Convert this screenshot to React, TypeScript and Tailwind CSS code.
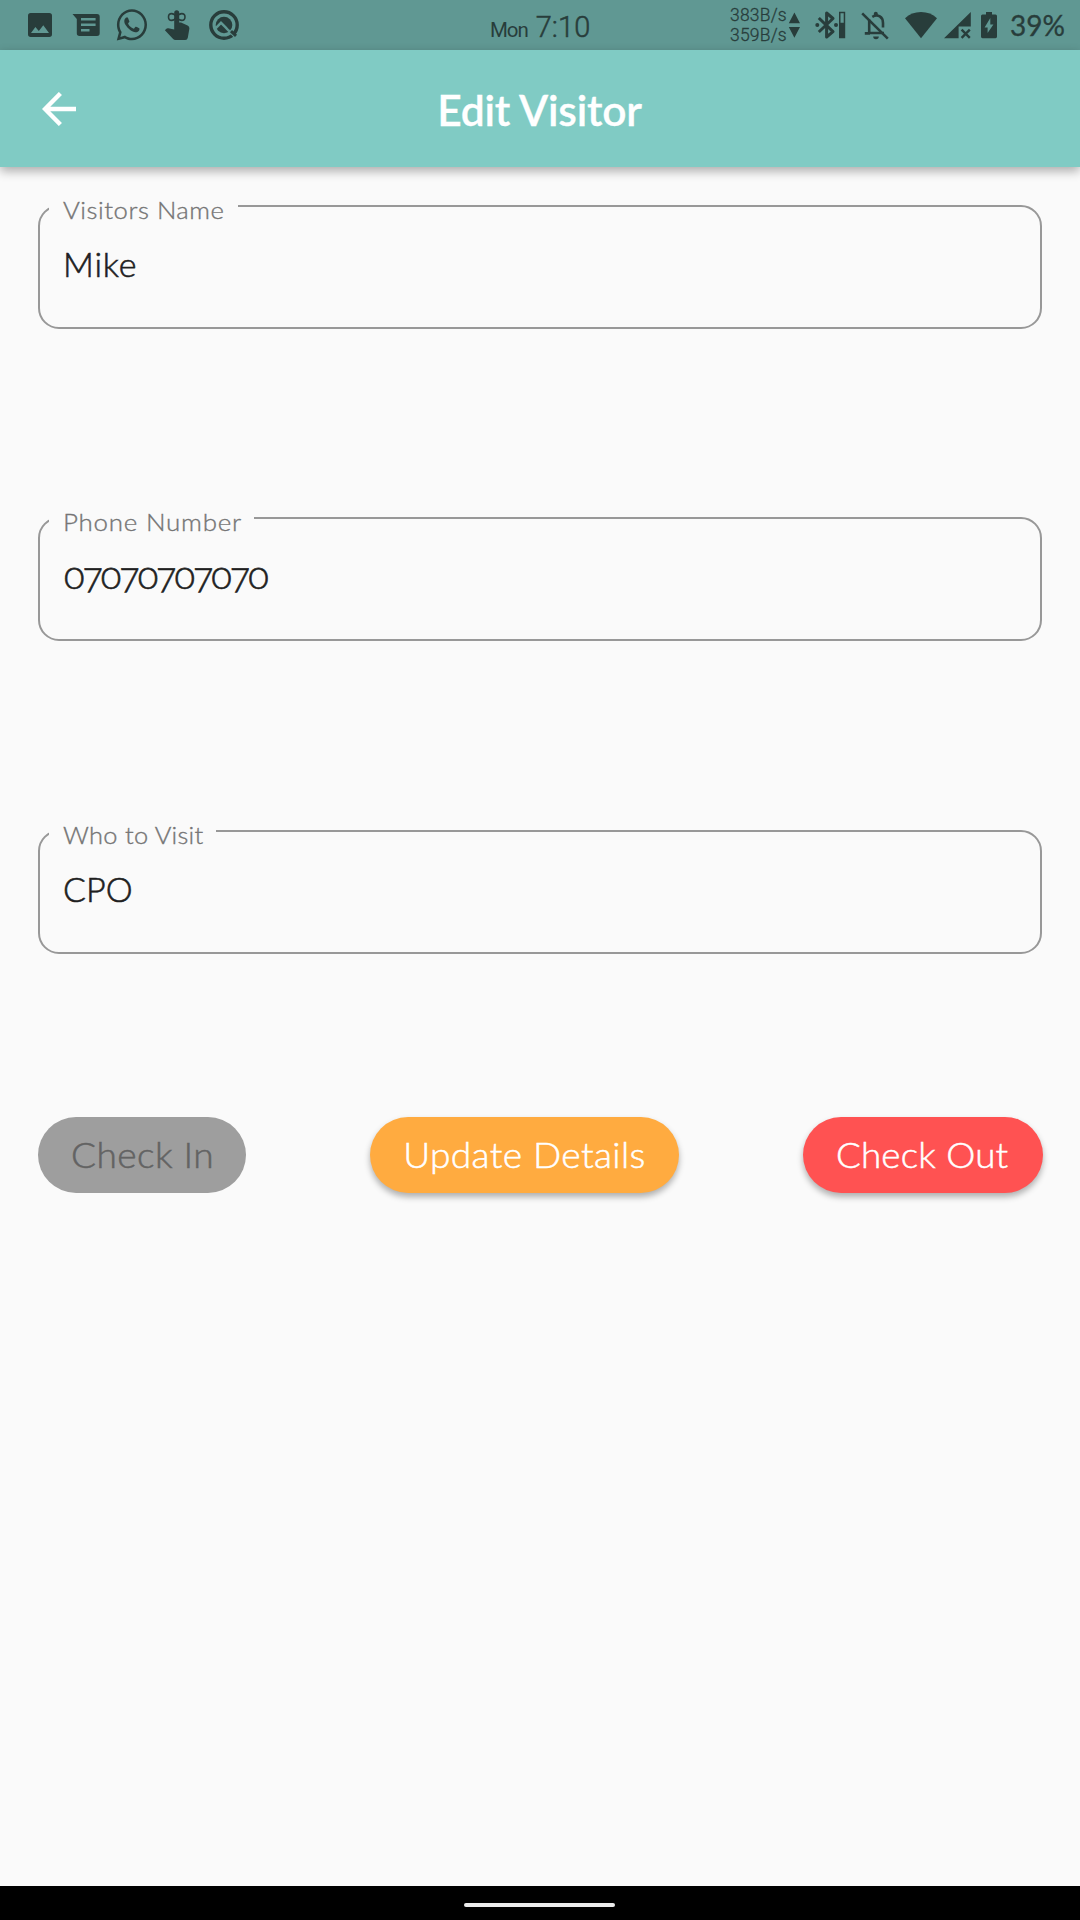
import React from "react";

const INK = "#283d3b";
const BAR = "#609893";

type GlyphProps = { box: string; w: number; h: number; className?: string; children: React.ReactNode };

function Glyph({ box, w, h, className = "", children }: GlyphProps) {
  return (
    <svg viewBox={box} width={w} height={h} fill={INK} className={`shrink-0 ${className}`}>
      {children}
    </svg>
  );
}

function StatusBar() {
  return (
    <div className="grid h-[50px] grid-cols-[491px_219px_1fr] bg-[#609893] text-[#283d3b]">
      <div className="flex h-[50px]">
        <Glyph box="0 0 260 50" w={260} h={50}>
          {/* image */}
          <path fillRule="evenodd" d="M30.7 13H49.3A2.7 2.7 0 0 1 52 15.7V34.3A2.7 2.7 0 0 1 49.3 37H30.7A2.7 2.7 0 0 1 28 34.3V15.7A2.7 2.7 0 0 1 30.7 13ZM31 33H49L43.3 25.2L38.8 31L35.4 27Z" />
          {/* message */}
          <path fillRule="evenodd" d="M72.5 14H97A2.7 2.7 0 0 1 99.7 16.7V33.3A2.7 2.7 0 0 1 97 36H79.5A2.7 2.7 0 0 1 76.8 33.3V19ZM81 18V20.6H95.6V18ZM81 23.4V26H95.6V23.4ZM81 28.9V31.5H89.5V28.9Z" />
          {/* whatsapp */}
          <g transform="translate(116.8 6.9) scale(0.0674 0.0702)">
            <path d="M380.9 97.1C339 55.1 283.2 32 223.9 32c-122.4 0-222 99.6-222 222 0 39.1 10.2 77.3 29.6 111L0 480l117.7-30.9c32.4 17.7 68.9 27 106.1 27h.1c122.3 0 224.1-99.6 224.1-222 0-59.3-25.2-115-67.1-157zm-157 341.6c-33.2 0-65.7-8.9-94-25.7l-6.7-4-69.8 18.3L72 359.2l-4.4-7c-18.5-29.4-28.2-63.3-28.2-98.2 0-101.7 82.8-184.5 184.6-184.5 49.3 0 95.6 19.2 130.4 54.1 34.8 34.9 56.2 81.2 56.1 130.5 0 101.8-84.9 184.6-186.6 184.6zm101.2-138.2c-5.5-2.8-32.8-16.2-37.9-18-5.1-1.9-8.8-2.8-12.5 2.8-3.7 5.6-14.3 18-17.6 21.8-3.2 3.7-6.5 4.2-12 1.4-32.6-16.3-54-29.1-75.5-66-5.7-9.8 5.7-9.1 16.3-30.3 1.8-3.7.9-6.9-.5-9.7-1.4-2.8-12.5-30.1-17.1-41.2-4.5-10.8-9.1-9.3-12.5-9.5-3.2-.2-6.9-.2-10.6-.2-3.7 0-9.7 1.4-14.8 6.9-5.1 5.6-19.4 19-19.4 46.3 0 27.3 19.9 53.7 22.6 57.4 2.8 3.7 39.1 59.7 94.8 83.8 35.2 15.2 49 16.5 66.6 13.9 10.7-1.6 32.8-13.4 37.4-26.4 4.6-13 4.6-24.1 3.2-26.4-1.3-2.5-5-3.9-10.5-6.6z" />
          </g>
          {/* reminder hand */}
          <g>
            <path d="M174.2 12.7a2.5 2.5 0 0 1 5 0V22.4H181L187.6 25.6Q189.6 26.6 189.4 28.6L187.8 37.7Q187.4 40 185.2 40H175.6Q174 40 172.9 38.8L164.9 30.3L166.1 28.9Q167 28.1 168.3 28.3L174.2 29.6Z" />
            <path d="M176.6 17C173.8 12.5 168.5 12.4 168.5 17S173.8 21.5 176.6 17C179.4 12.5 185 12.4 185 17S179.4 21.5 176.6 17Z" fill="none" stroke={INK} strokeWidth="1.6" />
          </g>
          {/* round search badge */}
          <g fill="none">
            <circle cx="224" cy="25" r="13.2" stroke={INK} strokeWidth="3.4" />
            <circle cx="224" cy="25" r="8.3" fill={INK} />
            <path d="M214.8 29.2L221 22.8L225.4 27.2L228.2 30.2L238 40" stroke={BAR} strokeWidth="2.4" />
            <path d="M231 31.2L236 35.8" stroke={INK} strokeWidth="3" />
          </g>
        </Glyph>
      </div>
      <div className="flex items-baseline font-['Roboto'] leading-[54px]">
        <span className="-ml-px text-[20.5px] tracking-[-1.1px]">Mon</span>
        <span className="ml-[8px] text-[29px] font-light tracking-[0.1px] [-webkit-text-stroke:0.5px_#283d3b]">7:10</span>
      </div>
      <div className="flex h-[50px] items-start">
        <div className="mt-[5px] ml-[20px] w-[58px] font-['Roboto'] text-[17.5px] leading-[20px] font-light tracking-[0.2px] [-webkit-text-stroke:0.3px_#283d3b]">
          <div>383B/s</div>
          <div>359B/s</div>
        </div>
        <Glyph box="788 0 212 50" w={212} h={50}>
          <path d="M794.4 12.6L800 23.2H788.8ZM794.4 37.7L800 27.1H788.8Z" />
          {/* bluetooth with battery gauge */}
          <path d="M818.8 18L833 31.7L826.6 37V13L833 18.5L818.8 32" fill="none" stroke={INK} strokeWidth="3" strokeLinejoin="round" />
          <circle cx="817.3" cy="25" r="2" />
          <circle cx="836" cy="25" r="2" />
          <path fillRule="evenodd" d="M839 11.8H845.2V38.2H839ZM840.5 13.3V22.8H843.7V13.3Z" />
          {/* bell off */}
          <path d="M869.2 19.5V33H884M864.8 33.4H870M872.3 16.8C878 13.5 883 17 883 23V27.5" fill="none" stroke={INK} strokeWidth="2.6" />
          <path d="M873.8 15.5V13.8a2 2 0 0 1 4 0V15.5ZM873.2 36.5H878.8A2.8 2.8 0 0 1 873.2 36.5Z" />
          <path d="M862.2 13.3L887.8 38.6" stroke={INK} strokeWidth="2.6" />
          {/* wifi */}
          <path d="M905 18.3Q911.5 12 921 12T937 18.3L921 38.3Z" />
          {/* cellular without data */}
          <path d="M970.8 12V26.4H958.6V38.2H944Z" />
          <path d="M961.6 29.6L969.8 37.8M969.8 29.6L961.6 37.8" stroke={INK} strokeWidth="2.4" />
          {/* charging battery */}
          <path fillRule="evenodd" d="M986 12H992V14.4H995.5Q997 14.4 997 16V36.6Q997 38.2 995.5 38.2H982.5Q981 38.2 981 36.6V16Q981 14.4 982.5 14.4H986ZM990.3 18L984.6 27.6H987.6V33L993.4 24.4H990.3Z" />
        </Glyph>
        <span className="ml-[10px] font-['Lato'] text-[28px] leading-[50px] whitespace-nowrap [-webkit-text-stroke:0.3px_#283d3b]">39%</span>
      </div>
    </div>
  );
}

function AppBar() {
  return (
    <header className="grid h-[117px] grid-cols-[80px_1fr_80px] items-center bg-[#80cbc4] shadow-[0_4px_10px_rgba(0,0,0,0.32)]">
      <button aria-label="Back" className="ml-[42px] w-[34px]">
        <svg viewBox="0 0 34 34" width="34" height="34" fill="none" stroke="#fff" strokeWidth="4.4">
          <path d="M34 17H4M18.4 1.5L3 17L18.4 32.5" />
        </svg>
      </button>
      <h1 className="-ml-px pt-[1px] text-center font-['Lato'] text-[42.5px] leading-[117px] font-semibold tracking-[-0.2px] text-white [-webkit-text-stroke:0.3px_#fff]">Edit Visitor</h1>
    </header>
  );
}

type FieldProps = { label: string; value: string; labelClass: string; textClass: string; valueClass: string };

function Field({ label, value, labelClass, textClass, valueClass }: FieldProps) {
  return (
    <div className="relative h-[124px] rounded-[21px] border-2 border-[#989898]">
      <label className={`absolute top-[-11px] left-[8.5px] h-[28px] bg-[#fafafa] pl-[14px] text-[24px] leading-[28px] whitespace-nowrap text-[#757575] [-webkit-text-stroke:0.35px_#757575] ${labelClass}`}>
        <span className={`inline-block origin-left ${textClass}`}>{label}</span>
      </label>
      <div className={`pl-[23px] leading-[40px] text-[#1f1f1f] [-webkit-text-stroke:0.6px_#1f1f1f] ${valueClass}`}>{value}</div>
    </div>
  );
}

export default function App() {
  return (
    <div className="flex h-[1920px] w-[1080px] flex-col overflow-hidden bg-[#fafafa]">
      <StatusBar />
      <AppBar />
      <main className="flex flex-1 flex-col px-[38px] pt-[38px] font-['Lato'] font-light">
        <div className="flex flex-col gap-[188.4px]">
          <Field label="Visitors Name" value="Mike" labelClass="w-[189.5px]" textClass="scale-x-107 tracking-[0.5px]" valueClass="pt-[37px] text-[34px] tracking-[0.8px]" />
          <Field label="Phone Number" value="07070707070" labelClass="w-[205.5px]" textClass="scale-x-108 tracking-[0.7px]" valueClass="pt-[35px] pl-[24px] text-[38px] tracking-[-2.1px] oldstyle-nums" />
          <Field label="Who to Visit" value="CPO" labelClass="w-[167.5px]" textClass="scale-x-106 tracking-[0.25px]" valueClass="pt-[37px] text-[34px]" />
        </div>
        <div className="mt-[163.7px] -mr-[0.5px] flex items-center justify-between text-[35px] leading-[74px]">
          <button className="h-[75.6px] w-[208px] rounded-full bg-[#9e9e9e] pb-[2px] pl-px text-[#636363] [-webkit-text-stroke:0.5px_#636363]">
            <span className="inline-block scale-x-106 tracking-[0.4px]">Check In</span>
          </button>
          <button className="h-[75.6px] w-[309px] rounded-full bg-[#ffab40] pb-[2px] pl-px text-white shadow-[0_4px_6px_rgba(0,0,0,0.3)] [-webkit-text-stroke:0.5px_#fff]">
            <span className="inline-block scale-x-106 tracking-[0.35px]">Update Details</span>
          </button>
          <button className="h-[75.6px] w-[240px] rounded-full bg-[#ff5252] pb-[2px] text-white shadow-[0_4px_6px_rgba(0,0,0,0.3)] [-webkit-text-stroke:0.5px_#fff]">
            <span className="inline-block scale-x-105 tracking-[0.2px]">Check Out</span>
          </button>
        </div>
      </main>
      <footer className="flex h-[34px] justify-center bg-black pt-[17px]">
        <div className="mr-px h-1 w-[151px] rounded-full bg-[#ececec]" />
      </footer>
    </div>
  );
}
